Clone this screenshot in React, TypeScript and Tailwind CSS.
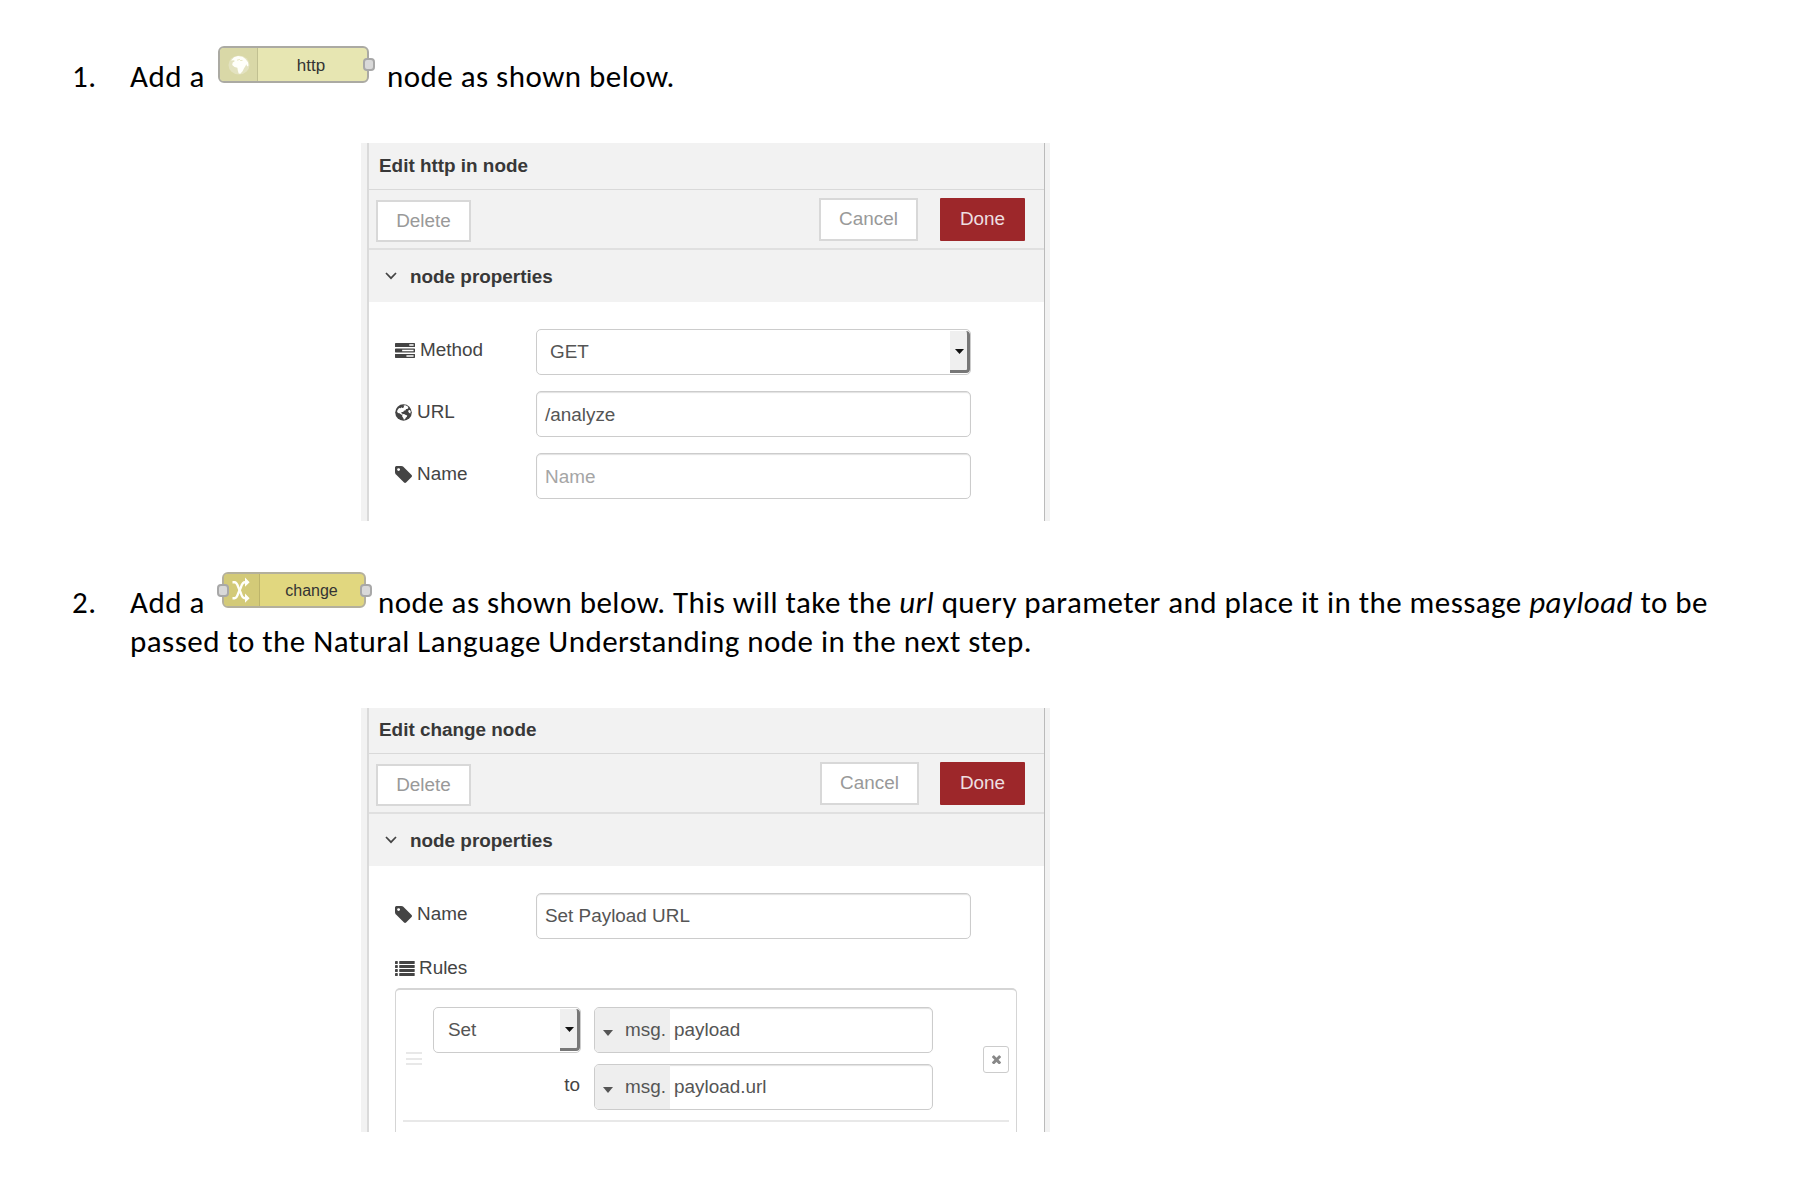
import type { ReactNode } from "react";

type IconProps = { className?: string };

function TagIcon({ className }: IconProps) {
  return (
    <svg viewBox="128 256 1515 1515" className={className} fill="currentColor">
      <path
        transform="translate(0 128)"
        d="M576 448q0-53-37.500-90.500t-90.500-37.500-90.500 37.500-37.500 90.500 37.500 90.500 90.500 37.500 90.500-37.500 37.500-90.500zm1067 576q0 53-37 90l-491 492q-39 37-91 37-53 0-90-37l-715-716q-38-37-64.500-101t-26.500-117v-416q0-52 38-90t90-38h416q53 0 117 26.500t102 64.500l715 714q37 39 37 91z"
      />
    </svg>
  );
}

function TasksIcon({ className }: IconProps) {
  return (
    <svg viewBox="0 128 1792 1408" preserveAspectRatio="none" className={className} fill="currentColor">
      <path d="M1024 1408h640v-128h-640v128zm-384-512h1024v-128h-1024v128zm640-512h384v-128h-384v128zm512 832v256q0 26-19 45t-45 19h-1664q-26 0-45-19t-19-45v-256q0-26 19-45t45-19h1664q26 0 45 19t19 45zm0-512v256q0 26-19 45t-45 19h-1664q-26 0-45-19t-19-45v-256q0-26 19-45t45-19h1664q26 0 45 19t19 45zm0-512v256q0 26-19 45t-45 19h-1664q-26 0-45-19t-19-45v-256q0-26 19-45t45-19h1664q26 0 45 19t19 45z" />
    </svg>
  );
}

function GlobeIcon({ className }: IconProps) {
  return (
    <svg viewBox="0 0 17 17" className={className}>
      <circle cx="8.500" cy="8.500" r="8.300" fill="#444" />
      <path
        fill="#fff"
        d="M8.600 1.500 10.500 1.200l2.300 1.300.6 1.400-1.100 1.200-1.300-.1-.4 1.200-1.700.6-.7 1.300-1.300-.2-.9 1.100 1.300.6.3 1.100-1.200.1-1.900-1.500-1.600-.4-.9-1.600.9-1.700 1.300-1.700 1.200.3 1.400-.9.3.8 1.300-.4.6-1z"
      />
      <path fill="#fff" d="m7.300 10.300 1.700-.4 1.900 1 1.300.7-.3 1.200-1.200 1-.5 1.100-1.300.9-.6-1.700-1.100-1.500z" />
      <path fill="#fff" d="m13.500 6.300 1.500-.3.700 1.500-.3 2-1.200-.5-.9-1.200z" />
    </svg>
  );
}

function ListIcon({ className }: IconProps) {
  return (
    <svg viewBox="0 0 20 15" className={className} fill="currentColor">
      {[0, 4, 8, 12].map((y) => (
        <g key={y}>
          <rect x="0" y={y} width="2.800" height="2.900" rx="0.400" />
          <rect x="4.200" y={y} width="15.500" height="2.900" rx="0.400" />
        </g>
      ))}
    </svg>
  );
}

function TimesIcon({ className }: IconProps) {
  return (
    <svg viewBox="302 322 1188 1188" className={className} fill="currentColor">
      <path d="M1490 1322q0 40-28 68l-136 136q-28 28-68 28t-68-28l-294-294-294 294q-28 28-68 28t-68-28l-136-136q-28-28-28-68t28-68l294-294-294-294q-28-28-28-68t28-68l136-136q28-28 68-28t68 28l294 294 294-294q28-28 68-28t68 28l136 136q28 28 28 68t-28 68l-294 294 294 294q28 28 28 68z" />
    </svg>
  );
}

function Port({ className }: { className: string }) {
  return <span className={`absolute h-[13px] w-[12px] rounded-[4px] border-2 border-[#a8a8a8] bg-[#d9d9d9] ${className}`} />;
}

function HttpChip() {
  return (
    <span className="relative ml-[14px] flex h-[37px] w-[151px] shrink-0 rounded-[6px] border-2 border-[#abaaa3] bg-[#e7e6b2]">
      <span className="flex w-[38px] items-center justify-center rounded-l-[4px] border-r border-[#c1c091] bg-[#d9d8a7]">
        <svg viewBox="0 0 22 20" className="h-[20px] w-[22px]">
          <ellipse cx="11" cy="10" rx="10.500" ry="9.500" fill="#e3e2c0" />
          <path
            fill="#fffffa"
            d="M3 5.500 6 2.300 10 1l4.500.8 3 2.200 2.500 3.200.5 3.300-1.300 1-.9-2.200-.8 1.800-1.600 2.300-1.300 2.800-2.300 2.600-1.600-.3-.9-3-.4-2.800-2.800-.7-2.400-2 .5-2.400 1.800-1-.2-1.300z"
          />
          <path d="m9 5.200 2.500-.7 1 1 2-.1" fill="none" stroke="#dedcae" strokeWidth="0.700" />
        </svg>
      </span>
      <span className="flex-1 pr-[3px] text-center font-['Liberation_Sans',Arial,sans-serif] text-[17px] leading-[35px] text-[#333]">http</span>
      <Port className="top-[10px] -right-[8px]" />
    </span>
  );
}

function ChangeChip() {
  return (
    <span className="relative ml-[18px] flex h-[36px] w-[144px] shrink-0 rounded-[6px] border-2 border-[#b4b09c] bg-[#e1d77f]">
      <span className="flex w-[36px] items-center justify-center rounded-l-[4px] border-r border-[#bdb46a] bg-[#d3ca78]">
        <svg viewBox="0 0 18 26" className="mr-[1px] h-[26px] w-[18px]">
          <g fill="none" stroke="#fffffa" strokeWidth="2.400">
            <path d="M0.500 5.200H2.500c2 0 3 2.500 3.800 5L9 16.500c.8 2.700 2 4.700 4 4.700H14.500" />
            <path d="M0.500 21.200H2.500c2 0 3-2.500 3.800-5L9 10c.8-2.700 2-4.800 4-4.800H14.500" />
          </g>
          <path fill="#fffffa" d="M13 .6 17.600 5.200 13 9.800zM13 16.600 17.600 21.200 13 25.800z" />
        </svg>
      </span>
      <span className="flex-1 pr-[1px] text-center font-['Liberation_Sans',Arial,sans-serif] text-[16px] leading-[33px] text-[#333]">change</span>
      <Port className="top-[10px] -left-[7px]" />
      <Port className="top-[10px] -right-[8px]" />
    </span>
  );
}

type PanelProps = { title: string; height: string; header: string; cancel: string; children: ReactNode };

function Panel({ title, height, header, cancel, children }: PanelProps) {
  return (
    <section
      className={`ml-[361px] flex w-[689px] overflow-hidden bg-[#f2f2f2] font-['Liberation_Sans',Arial,sans-serif] text-[18.900px] text-[#444] ${height}`}
    >
      <div className="w-[6px] shrink-0" />
      <div className="flex w-[678px] shrink-0 flex-col border-r border-l-2 border-r-[#bbb] border-l-[#dadada] bg-white">
        <h2 className={`shrink-0 border-b border-[#d9d9d9] bg-[#f2f2f2] pl-[10px] font-bold text-[#383838] ${header}`}>{title}</h2>
        <div className="flex h-[60px] shrink-0 items-start border-b-2 border-[#e0e0e0] bg-[#f2f2f2] pr-[19px] pl-[7px]">
          <button className="mt-[10px] h-[42px] w-[95px] border-2 border-[#d8d8d8] bg-white text-[#999]">Delete</button>
          <button className={`mt-[8px] ml-auto h-[43px] w-[99px] border-2 border-[#d8d8d8] bg-white text-[#999] ${cancel}`}>Cancel</button>
          <button className="mt-[8px] h-[43px] w-[85px] rounded-[1px] bg-[#9d272a] text-[#eedfe0]">Done</button>
        </div>
        <div className="flex h-[52px] shrink-0 items-center bg-[#f2f2f2] pl-[16px] font-bold text-[#383838]">
          <svg viewBox="0 0 12 8" className="mr-[13px] h-[8px] w-[12px]" fill="none" stroke="#444" strokeWidth="1.700">
            <path d="m1 1 5 5.200L11 1" />
          </svg>
          <span className="leading-[53px]">node properties</span>
        </div>
        {children}
      </div>
    </section>
  );
}

const box = "rounded-[5px] border border-[#ccc] bg-white text-[#555]";
const inset = "shadow-[inset_0_1px_1px_rgba(0,0,0,0.12)]";

function Field({ icon, label, gap, children }: { icon: ReactNode; label: string; gap: string; children: ReactNode }) {
  return (
    <div className="flex h-[46px] shrink-0 pl-[26px]">
      <div className="flex h-[43px] w-[141px] items-center">
        {icon}
        <span className={gap}>{label}</span>
      </div>
      {children}
    </div>
  );
}

function Select({ value, className, size }: { value: string; className: string; size: string }) {
  return (
    <div className={`flex justify-between overflow-hidden ${box} ${size}`}>
      <span className={className}>{value}</span>
      <span className="my-[1px] flex w-[20px] items-center justify-center rounded-r-[4px] border-r-[3px] border-b-[3px] border-[#777] bg-[#efefef]">
        <svg viewBox="0 0 9 5" className="mt-[1px] ml-[1px] h-[5px] w-[9px]">
          <path d="M0 0h9L4.500 5z" fill="#111" />
        </svg>
      </span>
    </div>
  );
}

function TypedInput({ value }: { value: string }) {
  return (
    <div className={`flex h-[46px] w-[339px] overflow-hidden leading-[44px] ${box} ${inset}`}>
      <span className="flex w-[75px] shrink-0 items-center bg-[#eee] pl-[8px]">
        <svg viewBox="0 0 10 6" className="mt-[5px] h-[6px] w-[10px]">
          <path d="M0 0h10L5 6z" fill="#555" />
        </svg>
        <span className="ml-[12px]">msg.</span>
      </span>
      <span className="ml-[4px]">{value}</span>
    </div>
  );
}

export default function App() {
  return (
    <main className="h-[1194px] w-[1814px] overflow-hidden bg-white font-['Carlito','Calibri','Lato',sans-serif] text-[31px] tracking-[0.470px] whitespace-nowrap text-black">
      <div className="flex h-[143px] items-start pt-[46px] pl-[72px] leading-[40px]">
        <span className="mt-[10px] w-[58px]">1.</span>
        <span className="mt-[10px] w-[74px]">Add a</span>
        <span className="tracking-normal"><HttpChip /></span>
        <span className="mt-[10px] ml-[18px]">node as shown below.</span>
      </div>

      <div className="tracking-normal">
        <Panel title="Edit http in node" height="h-[378px]" header="h-[47px] leading-[45px]" cancel="mr-[22px]">
          <div className="flex flex-col gap-[16px] pt-[27px]">
            <Field label="Method" gap="ml-[5px]" icon={<TasksIcon className="h-[15px] w-[20px]" />}>
              <Select value="GET" className="pl-[13px] leading-[44px]" size="h-[46px] w-[435px]" />
            </Field>
            <Field label="URL" gap="ml-[5px]" icon={<GlobeIcon className="h-[17px] w-[17px]" />}>
              <div className={`h-[46px] w-[435px] pl-[8px] leading-[45px] ${box} ${inset}`}>/analyze</div>
            </Field>
            <Field label="Name" gap="ml-[5px]" icon={<TagIcon className="h-[17px] w-[17px]" />}>
              <div className={`h-[46px] w-[435px] pl-[8px] leading-[45px] ${box} ${inset}`}>
                <span className="text-[#a5a5a5]">Name</span>
              </div>
            </Field>
          </div>
        </Panel>
      </div>

      <div className="h-[187px] pt-[51px] pl-[72px] leading-[39px]">
        <div className="flex h-[50px] items-start">
          <span className="mt-[11px] w-[58px]">2.</span>
          <span className="mt-[11px] w-[74px]">Add a</span>
          <span className="tracking-normal"><ChangeChip /></span>
          <span className="mt-[11px] ml-[12px] tracking-[0.450px]">
            node as shown below. This will take the <em>url</em> query parameter and place it in the message <em>payload</em> to be
          </span>
        </div>
        <p className="ml-[58px]">passed to the Natural Language Understanding node in the next step.</p>
      </div>

      <div className="tracking-normal">
        <Panel title="Edit change node" height="h-[424px]" header="h-[46px] leading-[44px]" cancel="mr-[21px]">
          <div className="pt-[27px]">
            <Field label="Name" gap="ml-[5px]" icon={<TagIcon className="h-[17px] w-[17px]" />}>
              <div className={`h-[46px] w-[435px] pl-[8px] leading-[44px] ${box} ${inset}`}>Set Payload URL</div>
            </Field>
          </div>
          <div className="flex h-[49px] shrink-0 items-center pt-[9px] pl-[26px]">
            <ListIcon className="h-[15px] w-[20px]" />
            <span className="ml-[4px]">Rules</span>
          </div>
          <div className="ml-[26px] h-[200px] w-[622px] shrink-0 rounded-t-[5px] border-x border-t-2 border-[#d5d5d5] px-[7px] pt-[17px]">
            <div className="flex h-[115px] border-b-2 border-[#e8e8e8]">
              <div className="mt-[45px] ml-[3px] flex h-[13px] w-[16px] flex-col justify-between">
                <i className="h-[2px] bg-[#e8e8e8]" />
                <i className="h-[2px] bg-[#e8e8e8]" />
                <i className="h-[2px] bg-[#e8e8e8]" />
              </div>
              <div className="ml-[11px] flex w-[148px] flex-col">
                <Select value="Set" className="pl-[14px] leading-[44px]" size="h-[46px] w-[148px]" />
                <span className="mt-[11px] pr-[1px] text-right leading-[42px]">to</span>
              </div>
              <div className="ml-[13px] flex flex-col gap-[11px]">
                <TypedInput value="payload" />
                <TypedInput value="payload.url" />
              </div>
              <button className="mt-[39px] ml-auto flex h-[27px] w-[26px] items-center justify-center rounded-[3px] border border-[#ccc] text-[#888]">
                <TimesIcon className="h-[9px] w-[9px]" />
              </button>
            </div>
          </div>
        </Panel>
      </div>
    </main>
  );
}
